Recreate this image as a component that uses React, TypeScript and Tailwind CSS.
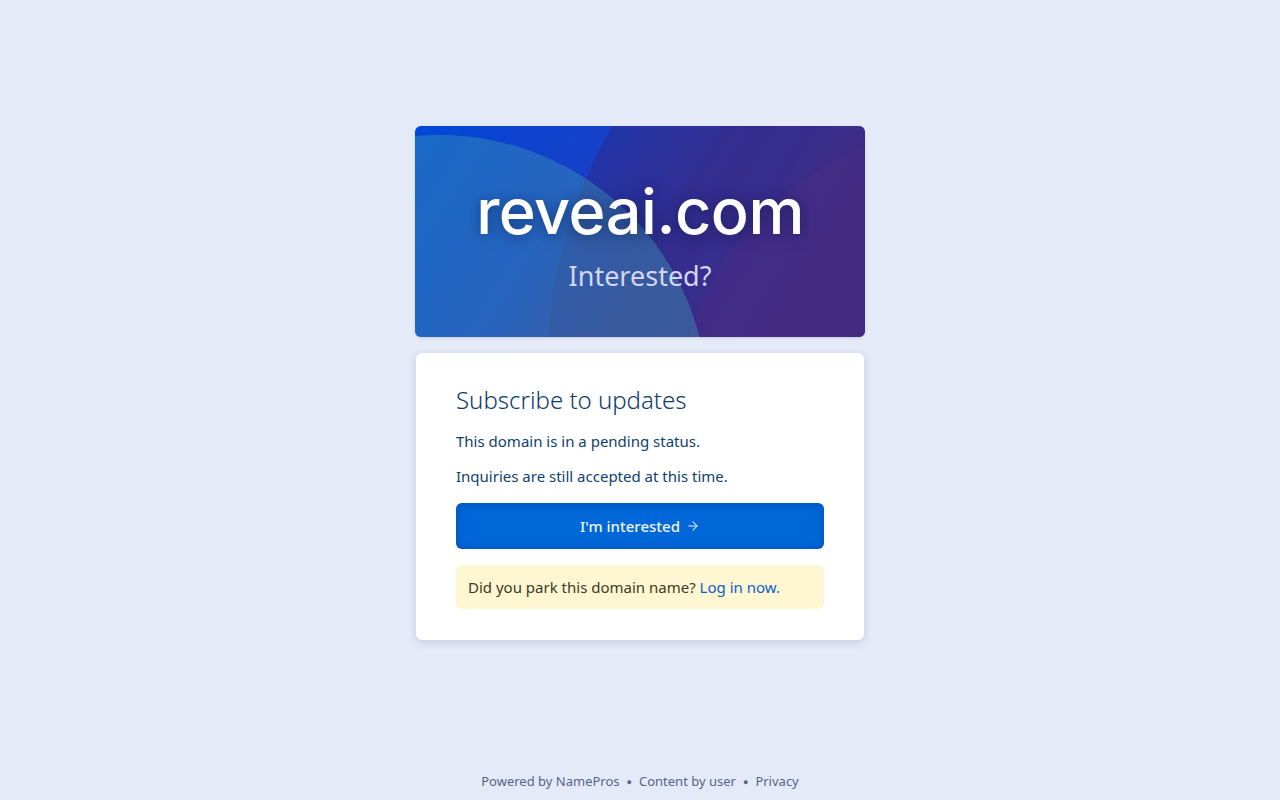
import { ArrowRight } from "lucide-react";

function HeroBackdrop() {
  return (
    <svg className="absolute inset-0 h-full w-full" viewBox="0 0 450 211" preserveAspectRatio="none">
      <defs>
        <linearGradient id="base" x1="0" y1="0" x2="1" y2="0.3">
          <stop offset="0" stopColor="#0048d8" />
          <stop offset="0.4" stopColor="#1640c8" />
          <stop offset="0.65" stopColor="#3d3194" />
          <stop offset="1" stopColor="#5a2b78" />
        </linearGradient>
      </defs>
      <rect width="450" height="211" fill="url(#base)" />
      <circle cx="587" cy="234" r="454" fill="#2a2c8e" opacity="0.55" />
      <circle cx="560" cy="300" r="300" fill="#4a2d86" opacity="0.45" />
      <circle cx="24" cy="278" r="269" fill="#3f98b4" opacity="0.42" />
    </svg>
  );
}

export default function App() {
  return (
    <div
      className="min-h-screen bg-[#e5eaf8] flex flex-col items-center"
      style={{ fontFamily: "'Noto Sans', 'Open Sans', sans-serif" }}
    >
      <main className="flex-1 flex flex-col items-center pt-[126px] w-[450px]">
        {/* Domain banner */}
        <div className="relative w-full h-[211px] rounded-md overflow-hidden shadow-sm">
          <HeroBackdrop />
          <div className="relative flex h-full flex-col items-center justify-center pt-[6px]">
            <h1
              className="text-[63px] leading-none font-medium text-white tracking-[-0.5px] [text-shadow:0_2px_14px_rgba(10,20,60,0.55)]"
              style={{ fontFamily: "Inter, 'Noto Sans', sans-serif" }}
            >
              reveai.com
            </h1>
            <p className="mt-[19px] text-[27px] leading-none text-[#d4d6f2]">Interested?</p>
          </div>
        </div>

        {/* Subscribe card */}
        <section className="mt-[16px] w-[448px] rounded-md bg-white px-[40px] pt-[32px] pb-[31px] shadow-[0_2px_8px_rgba(40,60,110,0.18)]">
          <h2 className="text-[24px] leading-[30px] font-light text-[#0b3c6b]">Subscribe to updates</h2>
          <p className="mt-[15px] text-[15px] leading-[22px] text-[#0f3f6e]">This domain is in a pending status.</p>
          <p className="mt-[13px] text-[15px] leading-[22px] text-[#0f3f6e]">Inquiries are still accepted at this time.</p>
          <button className="mt-[16px] flex h-[46px] w-full items-center justify-center gap-[6px] rounded-md bg-[#0067d8] text-[15px] font-medium text-[#eef4ff] shadow-[inset_0_0_10px_rgba(0,60,170,0.55)]">
            I'm interested
            <ArrowRight className="h-[14px] w-[14px]" strokeWidth={1.75} />
          </button>
          <div className="mt-[16px] rounded-md bg-[#fff7d1] px-[12px] py-[11px] text-[15px] leading-[22px] text-[#3b3a25]">
            Did you park this domain name? <a className="text-[#0a62c9]">Log in now.</a>
          </div>
        </section>
      </main>

      <footer className="pb-[9px] flex items-center gap-[7px] text-[13px] text-[#56648a]">
        <span>Powered by NamePros</span>
        <span className="text-[9px]">●</span>
        <span>Content by user</span>
        <span className="text-[9px]">●</span>
        <span>Privacy</span>
      </footer>
    </div>
  );
}
